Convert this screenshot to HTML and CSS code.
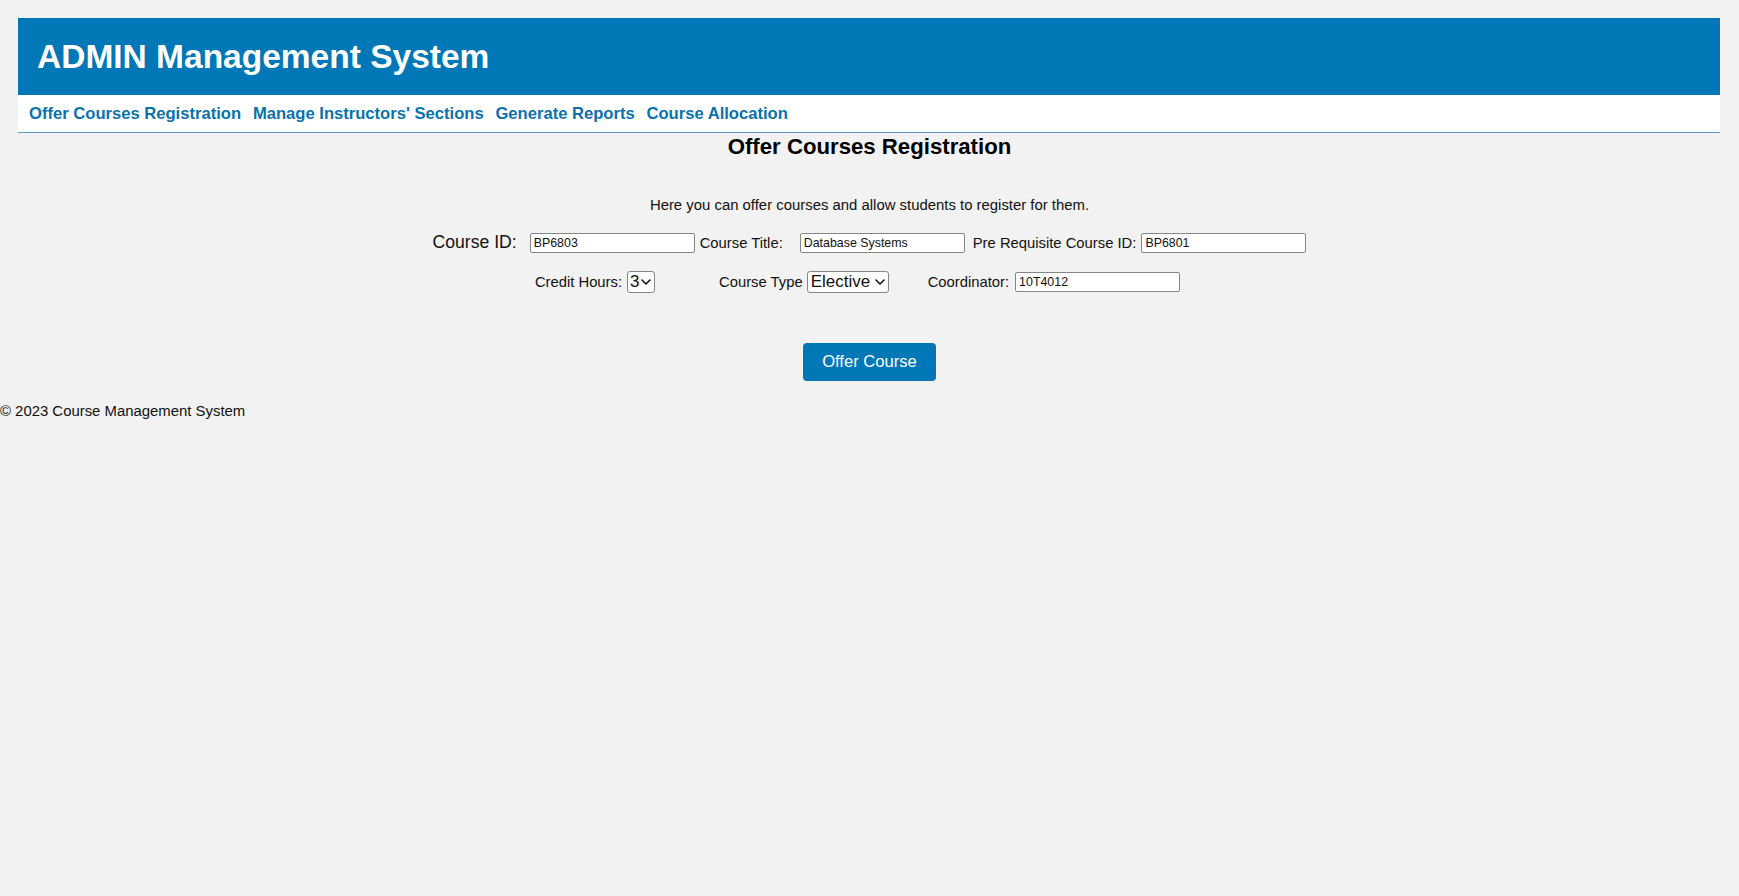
FILE: index.html
```html
<!DOCTYPE html>
<html lang="en">
<head>
<meta charset="utf-8">
<title>ADMIN Management System</title>
<link rel="stylesheet" href="styles.css">
</head>
<body>
<div class="top">
  <header class="banner">
    <h1 class="banner-title">ADMIN Management System</h1>
  </header>
  <nav class="nav">
    <a href="#" class="nav-link">Offer Courses Registration</a>
    <a href="#" class="nav-link">Manage Instructors' Sections</a>
    <a href="#" class="nav-link">Generate Reports</a>
    <a href="#" class="nav-link">Course Allocation</a>
  </nav>
</div>
<main class="content">
  <h2 class="page-title">Offer Courses Registration</h2>
  <p class="intro">Here you can offer courses and allow students to register for them.</p>
  <form class="course-form">
    <div class="form-row">
      <label class="lbl lbl-big gap-13" for="cid">Course ID:</label>
      <input class="txt gap-5" id="cid" type="text" value="BP6803">
      <label class="lbl gap-17" for="ctitle">Course Title:</label>
      <input class="txt gap-8" id="ctitle" type="text" value="Database Systems">
      <label class="lbl gap-5" for="pre">Pre Requisite Course ID:</label>
      <input class="txt" id="pre" type="text" value="BP6801">
    </div>
    <div class="form-row form-row-2">
      <label class="lbl gap-5" for="hours">Credit Hours:</label>
      <span class="sel-wrap gap-64">
        <select class="sel sel-hours" id="hours"><option>3</option></select>
        <svg class="chev" width="10" height="6" viewBox="0 0 10 6" aria-hidden="true"><path d="M1 1 L5 5 L9 1" fill="none" stroke="#111" stroke-width="1.6" stroke-linecap="round" stroke-linejoin="round"/></svg>
      </span>
      <label class="lbl gap-4" for="ctype">Course Type</label>
      <span class="sel-wrap gap-39">
        <select class="sel sel-type" id="ctype"><option>Elective</option></select>
        <svg class="chev" width="10" height="6" viewBox="0 0 10 6" aria-hidden="true"><path d="M1 1 L5 5 L9 1" fill="none" stroke="#111" stroke-width="1.6" stroke-linecap="round" stroke-linejoin="round"/></svg>
      </span>
      <label class="lbl gap-6" for="coord">Coordinator:</label>
      <input class="txt" id="coord" type="text" value="10T4012">
    </div>
    <div class="form-actions">
      <button type="button" class="btn">Offer Course</button>
    </div>
  </form>
</main>
<footer class="footer">© 2023 Course Management System</footer>
</body>
</html>
```

FILE: styles.css
```css
html, body {
  margin: 0;
  padding: 0;
}
body {
  background: #f2f2f2;
  font-family: "Liberation Sans", Arial, sans-serif;
  color: #111;
}
.top {
  margin: 18px 19px 0 18px;
}
.banner {
  background: #0077b6;
  height: 77px;
  padding: 0 19px;
  display: flex;
  align-items: center;
}
.banner-title {
  margin: 0;
  color: #fff;
  font-size: 33.5px;
  line-height: 38px;
  font-weight: bold;
}
.nav {
  background: #fff;
  height: 37px;
  border-bottom: 1px solid #5a9ec7;
  display: flex;
  align-items: center;
  gap: 11.8px;
  padding-left: 11px;
}
.nav-link {
  color: #0a72ad;
  font-weight: bold;
  font-size: 16.6px;
  text-decoration: none;
  line-height: 20px;
  padding-top: 1px;
}
.content {
  text-align: center;
}
.page-title {
  margin: 1px 0 0;
  font-size: 22.2px;
  line-height: 26px;
  font-weight: bold;
  color: #000;
}
.intro {
  margin: 36px 0 0;
  font-size: 14.9px;
  line-height: 18px;
  color: #111;
}
.course-form {
  margin: 0;
}
.form-row {
  display: flex;
  justify-content: center;
  align-items: center;
  height: 21px;
  margin-top: 18px;
}
.form-row-2 {
  height: 22px;
  margin-top: 18px;
  padding-right: 24px;
}
.lbl {
  font-size: 14.8px;
  color: #111;
  line-height: 18px;
}
.lbl-big {
  font-size: 17.6px;
  line-height: 21px;
}
.gap-4 { margin-right: 4px; }
.gap-5 { margin-right: 5px; }
.gap-6 { margin-right: 6px; }
.gap-8 { margin-right: 8px; }
.gap-13 { margin-right: 13px; }
.gap-17 { margin-right: 17px; }
.gap-39 { margin-right: 39px; }
.gap-64 { margin-right: 64px; }
.txt {
  box-sizing: border-box;
  width: 165px;
  height: 20px;
  padding: 1px 3px;
  margin-top: 0;
  margin-bottom: 0;
  margin-left: 0;
  border: 1px solid #858585;
  border-radius: 2px;
  background: #fff;
  font-family: "Liberation Sans", Arial, sans-serif;
  font-size: 12.4px;
  color: #111;
}
.sel-wrap {
  position: relative;
  display: inline-flex;
  align-items: center;
}
.sel {
  box-sizing: border-box;
  appearance: none;
  -webkit-appearance: none;
  height: 22px;
  margin: 0;
  padding: 0 14px 0 3px;
  border: 1px solid #858585;
  border-radius: 3px;
  background: #fff;
  font-family: "Liberation Sans", Arial, sans-serif;
  font-size: 17px;
  line-height: 20px;
  color: #111;
}
.sel-hours { width: 28px; padding-left: 2px; }
.sel-type { width: 82px; }
.chev {
  position: absolute;
  right: 4px;
  top: 8px;
  pointer-events: none;
}
.form-actions {
  margin-top: 50px;
  display: flex;
  justify-content: center;
}
.btn {
  box-sizing: border-box;
  width: 133px;
  height: 38px;
  background: #0077b6;
  color: #fff;
  border: none;
  border-radius: 4px;
  font-family: "Liberation Sans", Arial, sans-serif;
  font-size: 16.6px;
  padding: 0;
  cursor: pointer;
}
.footer {
  margin-top: 21px;
  font-size: 14.9px;
  line-height: 18px;
  color: #111;
}
```
